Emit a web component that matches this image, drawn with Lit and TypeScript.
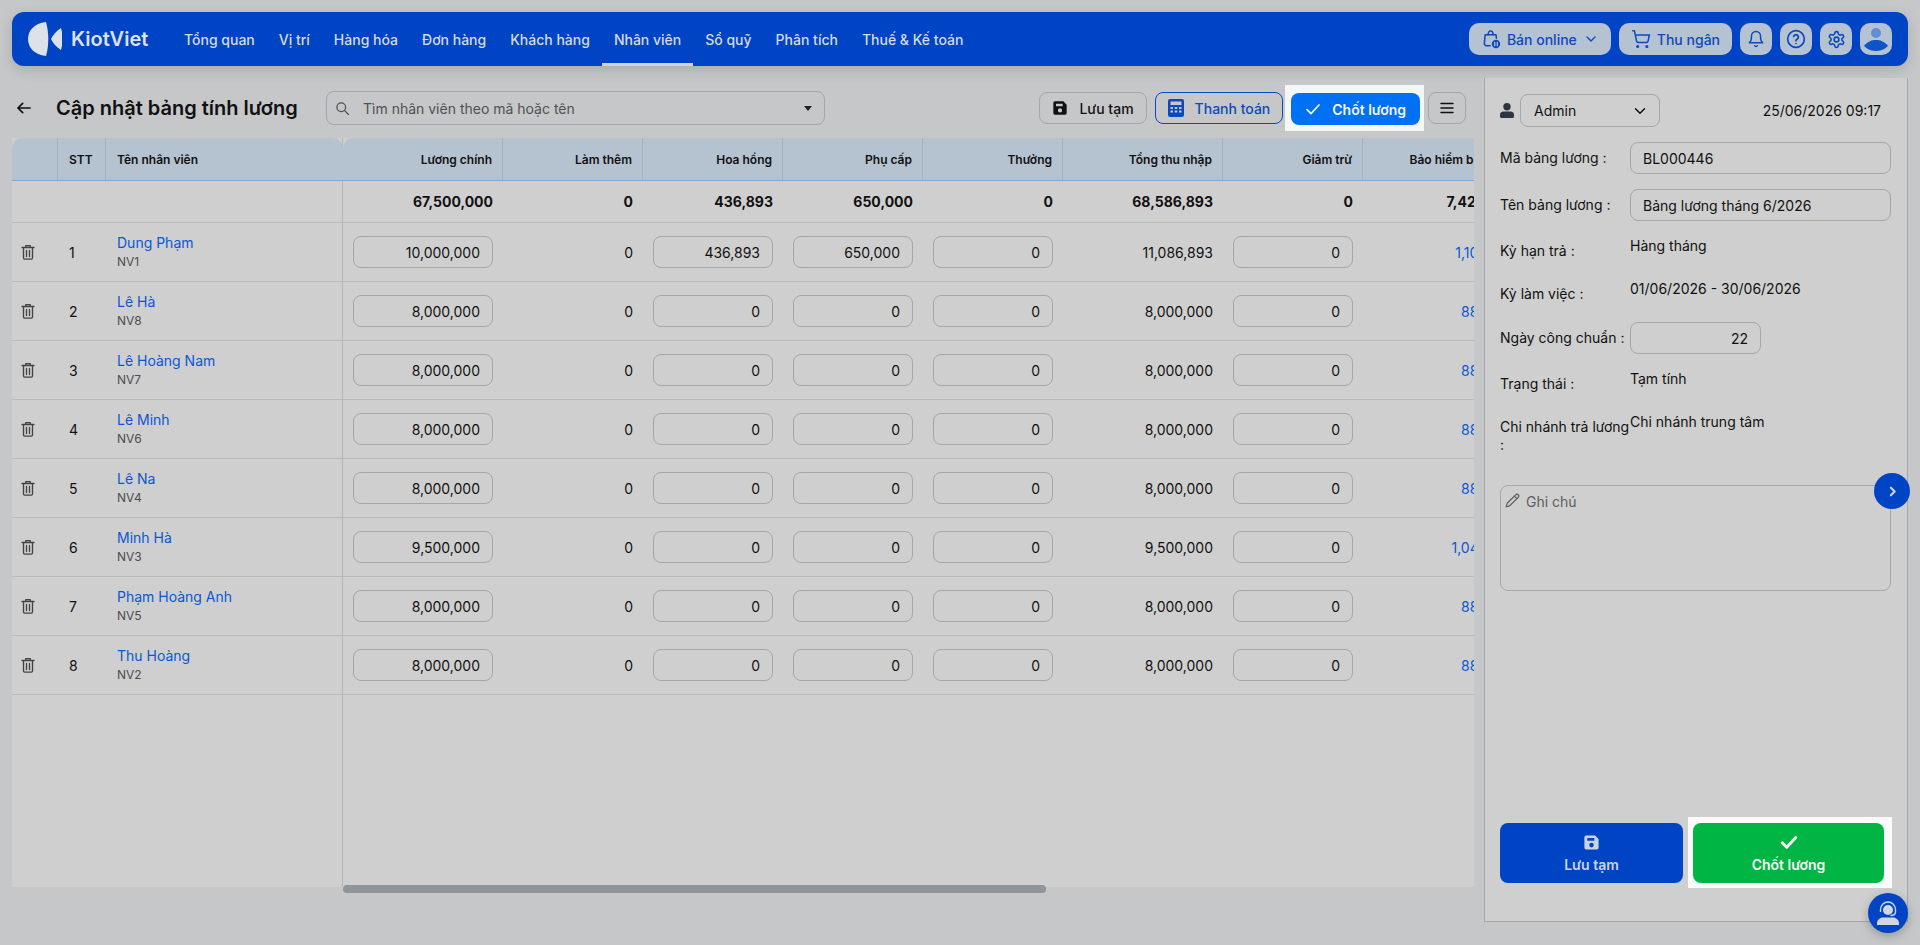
import { LitElement, html, css, svg } from 'lit';
import { customElement } from 'lit/decorators.js';

const navItems = ['Tổng quan', 'Vị trí', 'Hàng hóa', 'Đơn hàng', 'Khách hàng', 'Nhân viên', 'Sổ quỹ', 'Phân tích', 'Thuế & Kế toán'];
const headers = ['Lương chính', 'Làm thêm', 'Hoa hồng', 'Phụ cấp', 'Thưởng', 'Tổng thu nhập', 'Giảm trừ', 'Bảo hiểm bắt buộc'];
const totals = ['67,500,000', '0', '436,893', '650,000', '0', '68,586,893', '0', '7,425,000'];

const rows = [
  { name: 'Dung Phạm', code: 'NV1', main: '10,000,000', bonus: '436,893', extra: '650,000', total: '11,086,893', ins: '1,100,000' },
  { name: 'Lê Hà', code: 'NV8', main: '8,000,000', bonus: '0', extra: '0', total: '8,000,000', ins: '880,000' },
  { name: 'Lê Hoàng Nam', code: 'NV7', main: '8,000,000', bonus: '0', extra: '0', total: '8,000,000', ins: '880,000' },
  { name: 'Lê Minh', code: 'NV6', main: '8,000,000', bonus: '0', extra: '0', total: '8,000,000', ins: '880,000' },
  { name: 'Lê Na', code: 'NV4', main: '8,000,000', bonus: '0', extra: '0', total: '8,000,000', ins: '880,000' },
  { name: 'Minh Hà', code: 'NV3', main: '9,500,000', bonus: '0', extra: '0', total: '9,500,000', ins: '1,045,000' },
  { name: 'Phạm Hoàng Anh', code: 'NV5', main: '8,000,000', bonus: '0', extra: '0', total: '8,000,000', ins: '880,000' },
  { name: 'Thu Hoàng', code: 'NV2', main: '8,000,000', bonus: '0', extra: '0', total: '8,000,000', ins: '880,000' },
];

const icon = (size: number, body: unknown, stroke = 2) => html`
  <svg width=${size} height=${size} viewBox="0 0 24 24" fill="none" stroke="currentColor" stroke-width=${stroke} stroke-linecap="round" stroke-linejoin="round">${body}</svg>
`;

const saveIcon = (size: number) => html`
  <svg width=${size} height=${size} viewBox="0 0 24 24" fill="currentColor">
    <path fill-rule="evenodd" d="M2 4.5A2.5 2.5 0 0 1 4.500 2H17l5 5v12.500a2.500 2.500 0 0 1-2.500 2.500h-15A2.500 2.500 0 0 1 2 19.500zM6 5.500v4h10v-4zM12 12.500a3.200 3.200 0 1 0 0 6.400 3.200 3.200 0 0 0 0-6.400z" />
  </svg>
`;

const calcIcon = html`
  <svg width="16" height="18" viewBox="0 0 16 18" fill="currentColor">
    <path fill-rule="evenodd" d="M2 0h12a2 2 0 0 1 2 2v14a2 2 0 0 1-2 2H2a2 2 0 0 1-2-2V2a2 2 0 0 1 2-2zM2.500 2.500v3.500h11V2.500zM2.500 8v2h2.500V8zM6.700 8v2h2.600V8zM11 8v2h2.500V8zM2.500 11.500v2h2.500v-2zM6.700 11.500v2h2.600v-2zM11 11.500v2h2.500v-2z" />
  </svg>
`;

const trashIcon = icon(18, svg`
  <path d="M4 6h16M9 6V3.500h6V6M6 6v14a1.500 1.500 0 0 0 1.500 1.500h9A1.500 1.500 0 0 0 18 20V6M10 10v8M14 10v8" />
`, 1.8);

const chevron = (size: number, stroke = 2) => icon(size, svg`<path d="m6 9 6 6 6-6" />`, stroke);

const bagIcon = icon(20, svg`
  <path d="M11 20H6.500A2.500 2.500 0 0 1 4 17.300L5 7h13l.5 4" />
  <path d="M8.500 7c0-6 6-6 6 0" />
  <circle cx="18" cy="18" r="5" fill="currentColor" stroke="none" />
  <path d="M16.500 16v4M19.500 16v4" stroke="#b5c2d1" stroke-width="1.500" />
`, 1.8);

const cartIcon = icon(20, svg`
  <circle cx="8" cy="21" r="1" /><circle cx="19" cy="21" r="1" />
  <path d="M2.050 2.050h2l2.660 12.420a2 2 0 0 0 2 1.580h9.780a2 2 0 0 0 1.950-1.570l1.650-7.430H5.120" />
`, 1.8);

const bellIcon = icon(18, svg`
  <path d="M6 8a6 6 0 0 1 12 0c0 7 3 9 3 9H3s3-2 3-9" /><path d="M10.300 21a1.940 1.940 0 0 0 3.400 0" />
`);

const helpIcon = icon(20, svg`
  <circle cx="12" cy="12" r="10" /><path d="M9.100 9a3 3 0 0 1 5.800 1c0 2-3 2.500-3 4" /><path d="M12 17.500h.01" />
`);

const gearIcon = icon(19, svg`
  <path d="M12.220 2h-.44a2 2 0 0 0-2 2v.18a2 2 0 0 1-1 1.730l-.43.250a2 2 0 0 1-2 0l-.15-.08a2 2 0 0 0-2.730.730l-.22.380a2 2 0 0 0 .73 2.730l.15.100a2 2 0 0 1 1 1.720v.510a2 2 0 0 1-1 1.740l-.15.090a2 2 0 0 0-.73 2.730l.22.380a2 2 0 0 0 2.730.730l.15-.08a2 2 0 0 1 2 0l.43.250a2 2 0 0 1 1 1.730V20a2 2 0 0 0 2 2h.44a2 2 0 0 0 2-2v-.18a2 2 0 0 1 1-1.730l.43-.25a2 2 0 0 1 2 0l.15.080a2 2 0 0 0 2.730-.730l.22-.390a2 2 0 0 0-.73-2.730l-.15-.08a2 2 0 0 1-1-1.740v-.5a2 2 0 0 1 1-1.740l.15-.090a2 2 0 0 0 .73-2.730l-.22-.38a2 2 0 0 0-2.730-.73l-.15.080a2 2 0 0 1-2 0l-.43-.25a2 2 0 0 1-1-1.730V4a2 2 0 0 0-2-2z" />
  <circle cx="12" cy="12" r="3" />
`);

const personIcon = html`
  <svg width="14" height="15" viewBox="0 0 14 15" fill="currentColor">
    <circle cx="7" cy="3.700" r="3.700" />
    <path d="M3.500 8.500h7A3.500 3.500 0 0 1 14 12v1.500a1.500 1.500 0 0 1-1.500 1.500h-11A1.500 1.500 0 0 1 0 13.500V12a3.500 3.500 0 0 1 3.500-3.500z" />
  </svg>
`;

@customElement('app-root')
export class AppRoot extends LitElement {
  static styles = css`
    :host {
      display: block;
      position: relative;
      height: 945px;
      overflow: hidden;
      background: #c6c7c9;
      font-family: Inter, 'Noto Sans', sans-serif;
      font-size: 14px;
      color: #111;
    }

    .navbar {
      display: flex;
      align-items: stretch;
      height: 54px;
      margin: 12px 12px 12px;
      padding: 0 16px;
      box-sizing: border-box;
      border-radius: 12px;
      background: #0044c6;
      box-shadow: 0 4px 14px rgba(0, 0, 0, 0.14);
    }

    .logo {
      display: flex;
      align-items: center;
      gap: 9px;
      width: 144px;
      color: #dde1e8;
      font-size: 20px;
      font-weight: 600;
    }

    .nav-items {
      display: flex;
    }

    .nav-item {
      display: flex;
      align-items: center;
      padding: 0 12px;
      color: #d6dae2;
      font-weight: 500;
      white-space: nowrap;
    }

    .nav-item.active {
      box-shadow: inset 0 -3px 0 #cfd3da;
    }

    .nav-tools {
      display: flex;
      align-items: center;
      gap: 8px;
      margin-left: auto;
    }

    .tool {
      display: flex;
      align-items: center;
      justify-content: center;
      gap: 6px;
      height: 32px;
      min-width: 32px;
      box-sizing: border-box;
      border-radius: 10px;
      background: #b5c2d1;
      color: #0c49bd;
      font-weight: 500;
      white-space: nowrap;
    }

    .tool.wide {
      padding: 0 12px;
    }

    .main {
      display: flex;
      gap: 10px;
      height: 844px;
      margin-left: 12px;
    }

    .content {
      display: flex;
      flex-direction: column;
      width: 1462px;
    }

    .toolbar {
      display: flex;
      align-items: center;
      flex: none;
      height: 60px;
    }

    .back {
      display: flex;
      margin: 0 24px 0 4px;
    }

    h1 {
      width: 270px;
      margin: 0;
      font-size: 20px;
      font-weight: 600;
      white-space: nowrap;
    }

    .search {
      display: flex;
      align-items: center;
      gap: 13px;
      width: 499px;
      height: 34px;
      padding: 0 12px 0 8px;
      box-sizing: border-box;
      border: 1px solid #a5a6a9;
      border-radius: 8px;
      color: #4f5153;
    }

    .search span {
      flex: 1;
    }

    .caret {
      width: 0;
      height: 0;
      border: 4px solid transparent;
      border-top: 5px solid #222;
      border-bottom: 0;
    }

    .actions {
      display: flex;
      align-items: center;
      margin-left: auto;
      padding-right: 8px;
    }

    .btn {
      display: flex;
      align-items: center;
      gap: 11px;
      height: 32px;
      padding: 0 12px;
      box-sizing: border-box;
      border: 1px solid #a5a6a9;
      border-radius: 8px;
      font-weight: 500;
      white-space: nowrap;
    }

    .btn.pay {
      margin-left: 8px;
      border-color: #0c49bd;
      color: #0c49bd;
    }

    .btn.finish {
      border: 0;
      padding: 0 14px;
      background: #0070f4;
      color: #f2f5fa;
      font-weight: 600;
    }

    .btn.menu {
      justify-content: center;
      width: 38px;
      padding: 0;
      margin-left: 4px;
    }

    .spot {
      margin-left: 2px;
      padding: 8px 4px 6px 6px;
      background: #f5f6f8;
    }

    .table {
      position: relative;
      display: flex;
      flex: 1;
      margin-bottom: 35px;
      background: #cfcfcf;
    }

    .frozen {
      flex: none;
      width: 331px;
      box-sizing: border-box;
      border-right: 1px solid #b4b5b7;
    }

    .scroller {
      flex: 1;
      overflow: hidden;
    }

    .row {
      display: grid;
      align-items: center;
      box-sizing: border-box;
      height: 59px;
      border-bottom: 1px solid #b9babc;
    }

    .frozen .row {
      grid-template-columns: 46px 48px 1fr;
    }

    .scroller .row {
      grid-template-columns: 160px 140px 140px 140px 140px 160px 140px 164px;
      width: 1184px;
    }

    .row.head {
      height: 43px;
      align-items: stretch;
      border-bottom: 1px solid #82a7d6;
      border-radius: 10px 10px 0 0;
      background: #b5c2d0;
      font-size: 12px;
      font-weight: 600;
    }

    .frozen .row.head {
      margin-right: -1px;
    }

    .head .cell {
      display: flex;
      align-items: center;
      justify-content: flex-end;
      border-right: 1px solid #a9b3bf;
      white-space: nowrap;
    }

    .head .cell:last-child {
      border-right: 0;
    }

    .frozen .head .cell {
      justify-content: flex-start;
      padding: 0 11px;
    }

    .row.sum {
      height: 42px;
      font-weight: 700;
    }

    .cell {
      padding: 0 10px;
      box-sizing: border-box;
      text-align: right;
      white-space: nowrap;
    }

    .frozen .cell {
      padding: 0 11px;
      text-align: left;
    }

    .frozen .cell.del {
      display: flex;
      padding: 0 0 0 7px;
      color: #414345;
    }

    .ins {
      color: #0b56d6;
    }

    .name {
      color: #0b56d6;
      line-height: 18px;
    }

    .code {
      margin-top: 2px;
      color: #4c4d50;
      font-size: 12px;
      line-height: 16px;
    }

    input {
      display: block;
      width: 100%;
      height: 32px;
      padding: 0 12px;
      box-sizing: border-box;
      border: 1px solid #a5a6a9;
      border-radius: 8px;
      outline: 0;
      background: transparent;
      color: #111;
      font: inherit;
    }

    .cell input {
      text-align: right;
    }

    .thumb {
      position: absolute;
      left: 331px;
      bottom: -6px;
      width: 703px;
      height: 8px;
      border-radius: 4px;
      background: #90959a;
    }

    .side {
      position: relative;
      display: flex;
      flex-direction: column;
      width: 424px;
      padding: 16px 16px 38px 15px;
      box-sizing: border-box;
      border: 1px solid #a5a6a9;
      border-top: 0;
      background: #cfcfcf;
    }

    .side-top {
      display: flex;
      align-items: center;
      margin-bottom: 15px;
    }

    .side-top > svg {
      flex: none;
      color: #2c3540;
    }

    .select {
      display: flex;
      align-items: center;
      justify-content: space-between;
      width: 140px;
      height: 33px;
      margin-left: 6px;
      padding: 0 10px 0 13px;
      box-sizing: border-box;
      border: 1px solid #a5a6a9;
      border-radius: 8px;
    }

    .date {
      margin-left: auto;
      padding-right: 10px;
    }

    .fields {
      display: grid;
      grid-template-columns: 130px 1fr;
      row-gap: 15px;
      line-height: 18px;
    }

    .label {
      align-self: center;
    }

    .label.offset {
      align-self: start;
      padding-top: 6px;
    }

    .value {
      min-height: 28px;
      padding-top: 1px;
      box-sizing: border-box;
    }

    .short {
      width: 131px;
      text-align: right;
    }

    .note {
      display: flex;
      align-items: flex-start;
      gap: 6px;
      height: 106px;
      margin-top: 31px;
      padding: 7px 4px;
      box-sizing: border-box;
      border: 1px solid #a5a6a9;
      border-radius: 8px;
      color: #5c5e60;
    }

    .collapse {
      position: absolute;
      top: 395px;
      left: 389px;
      display: flex;
      align-items: center;
      justify-content: center;
      width: 36px;
      height: 36px;
      border-radius: 50%;
      background: #0044c6;
      color: #cfd3da;
    }

    .side-actions {
      display: flex;
      align-items: flex-end;
      margin-top: auto;
    }

    .big {
      display: flex;
      flex-direction: column;
      align-items: center;
      justify-content: center;
      gap: 5px;
      width: 191px;
      height: 60px;
      border-radius: 8px;
      font-weight: 600;
    }

    .big.save {
      background: #0044c6;
      color: #ccd3df;
    }

    .big.done {
      background: #00b544;
      color: #f5f8f5;
    }

    .spot.side-spot {
      margin: 0 -1px -5px 5px;
      padding: 6px 8px 5px 5px;
      background: #f9fafa;
    }

    .support {
      position: absolute;
      right: 12px;
      bottom: 12px;
      display: flex;
      align-items: center;
      justify-content: center;
      width: 40px;
      height: 40px;
      border-radius: 50%;
      background: #0044c6;
      box-shadow: 0 3px 10px rgba(0, 0, 0, 0.25);
      color: #cfd6e2;
    }

    .avatar {
      padding: 0;
      overflow: hidden;
    }
  `;

  renderNav() {
    return html`
      <header class="navbar">
        <div class="logo">
          <svg width="34" height="34" viewBox="0 0 34 34" fill="currentColor">
            <path d="M18 0C6 1 0 9 0 17c0 8 6 16 18 17 3-10 3-24 0-34z" />
            <path d="M33 6c-5 3-8 7-10 11 2 4 5 8 10 11 2-7 2-15 0-22z" />
          </svg>
          <span>KiotViet</span>
        </div>
        <nav class="nav-items">
          ${navItems.map((n) => html`<div class="nav-item ${n === 'Nhân viên' ? 'active' : ''}">${n}</div>`)}
        </nav>
        <div class="nav-tools">
          <div class="tool wide">${bagIcon}<span>Bán online</span>${chevron(16)}</div>
          <div class="tool wide">${cartIcon}<span>Thu ngân</span></div>
          <div class="tool">${bellIcon}</div>
          <div class="tool">${helpIcon}</div>
          <div class="tool">${gearIcon}</div>
          <div class="tool avatar">
            <svg width="24" height="26" viewBox="0 0 24 26">
              <circle cx="12" cy="7" r="5" fill="#5f8fd6" />
              <path d="M0 20c4-5 8-6 12-6s8 1 12 6c-4 4-8 5-12 5s-8-1-12-5z" fill="#0d55c4" />
            </svg>
          </div>
        </div>
      </header>
    `;
  }

  renderToolbar() {
    return html`
      <div class="toolbar">
        <div class="back">
          ${icon(16, svg`<path d="M21 12H3M10 5l-7 7 7 7" />`, 2.6)}
        </div>
        <h1>Cập nhật bảng tính lương</h1>
        <div class="search">
          ${icon(15, svg`<circle cx="10" cy="10" r="7" /><path d="m15 15 6.500 6.500" />`, 2)}
          <span>Tìm nhân viên theo mã hoặc tên</span>
          <i class="caret"></i>
        </div>
        <div class="actions">
          <div class="btn">${saveIcon(16)}Lưu tạm</div>
          <div class="btn pay">${calcIcon}Thanh toán</div>
          <div class="spot">
            <div class="btn finish">${icon(16, svg`<path d="m3 13 6 6L21 6" />`, 2.6)}Chốt lương</div>
          </div>
          <div class="btn menu">
            ${icon(18, svg`<path d="M4 6h16M4 12h16M4 18h16" />`, 2)}
          </div>
        </div>
      </div>
    `;
  }

  renderTable() {
    return html`
      <div class="table">
        <div class="frozen">
          <div class="row head">
            <div class="cell"></div>
            <div class="cell">STT</div>
            <div class="cell">Tên nhân viên</div>
          </div>
          <div class="row sum"></div>
          ${rows.map((r, i) => html`
            <div class="row">
              <div class="cell del">${trashIcon}</div>
              <div class="cell">${i + 1}</div>
              <div class="cell">
                <div class="name">${r.name}</div>
                <div class="code">${r.code}</div>
              </div>
            </div>
          `)}
        </div>
        <div class="scroller">
          <div class="row head">
            ${headers.map((h) => html`<div class="cell">${h}</div>`)}
          </div>
          <div class="row sum">
            ${totals.map((t) => html`<div class="cell">${t}</div>`)}
          </div>
          ${rows.map((r) => html`
            <div class="row">
              <div class="cell"><input value=${r.main} /></div>
              <div class="cell">0</div>
              <div class="cell"><input value=${r.bonus} /></div>
              <div class="cell"><input value=${r.extra} /></div>
              <div class="cell"><input value="0" /></div>
              <div class="cell">${r.total}</div>
              <div class="cell"><input value="0" /></div>
              <div class="cell ins">${r.ins}</div>
            </div>
          `)}
        </div>
        <div class="thumb"></div>
      </div>
    `;
  }

  renderSide() {
    return html`
      <aside class="side">
        <div class="side-top">
          ${personIcon}
          <div class="select"><span>Admin</span>${chevron(18)}</div>
          <div class="date">25/06/2026 09:17</div>
        </div>
        <div class="fields">
          <div class="label">Mã bảng lương :</div>
          <input value="BL000446" />
          <div class="label">Tên bảng lương :</div>
          <input value="Bảng lương tháng 6/2026" />
          <div class="label offset">Kỳ hạn trả :</div>
          <div class="value">Hàng tháng</div>
          <div class="label offset">Kỳ làm việc :</div>
          <div class="value">01/06/2026 - 30/06/2026</div>
          <div class="label">Ngày công chuẩn :</div>
          <input class="short" value="22" />
          <div class="label offset">Trạng thái :</div>
          <div class="value">Tạm tính</div>
          <div class="label offset">Chi nhánh trả lương :</div>
          <div class="value">Chi nhánh trung tâm</div>
        </div>
        <div class="note">
          ${icon(15, svg`<path d="M17 3a2.850 2.830 0 1 1 4 4L7.500 20.500 2 22l1.500-5.500Z" /><path d="m15 5 4 4" />`, 2)}
          <span>Ghi chú</span>
        </div>
        <div class="collapse">
          ${icon(13, svg`<path d="m9 5 7 7-7 7" />`, 4)}
        </div>
        <div class="side-actions">
          <div class="big save">${saveIcon(17)}Lưu tạm</div>
          <div class="spot side-spot">
            <div class="big done">
              ${icon(18, svg`<path d="m3 13 6 6L21 6" />`, 4)}Chốt lương
            </div>
          </div>
        </div>
      </aside>
    `;
  }

  render() {
    return html`
      ${this.renderNav()}
      <div class="main">
        <div class="content">
          ${this.renderToolbar()}
          ${this.renderTable()}
        </div>
        ${this.renderSide()}
      </div>
      <div class="support">
        <svg width="26" height="26" viewBox="0 0 26 26" fill="none" stroke="currentColor" stroke-width="1.400">
          <circle cx="13" cy="10" r="5" fill="currentColor" stroke="none" />
          <path d="M5.500 12V9.500a7.500 7.500 0 0 1 15 0V12c0 2-2 3.500-5 3.500" />
          <path d="M2 25v-2c0-3 3-5.500 6-5.500h10c3 0 6 2.500 6 5.500v2z" fill="currentColor" stroke="none" />
        </svg>
      </div>
    `;
  }
}
